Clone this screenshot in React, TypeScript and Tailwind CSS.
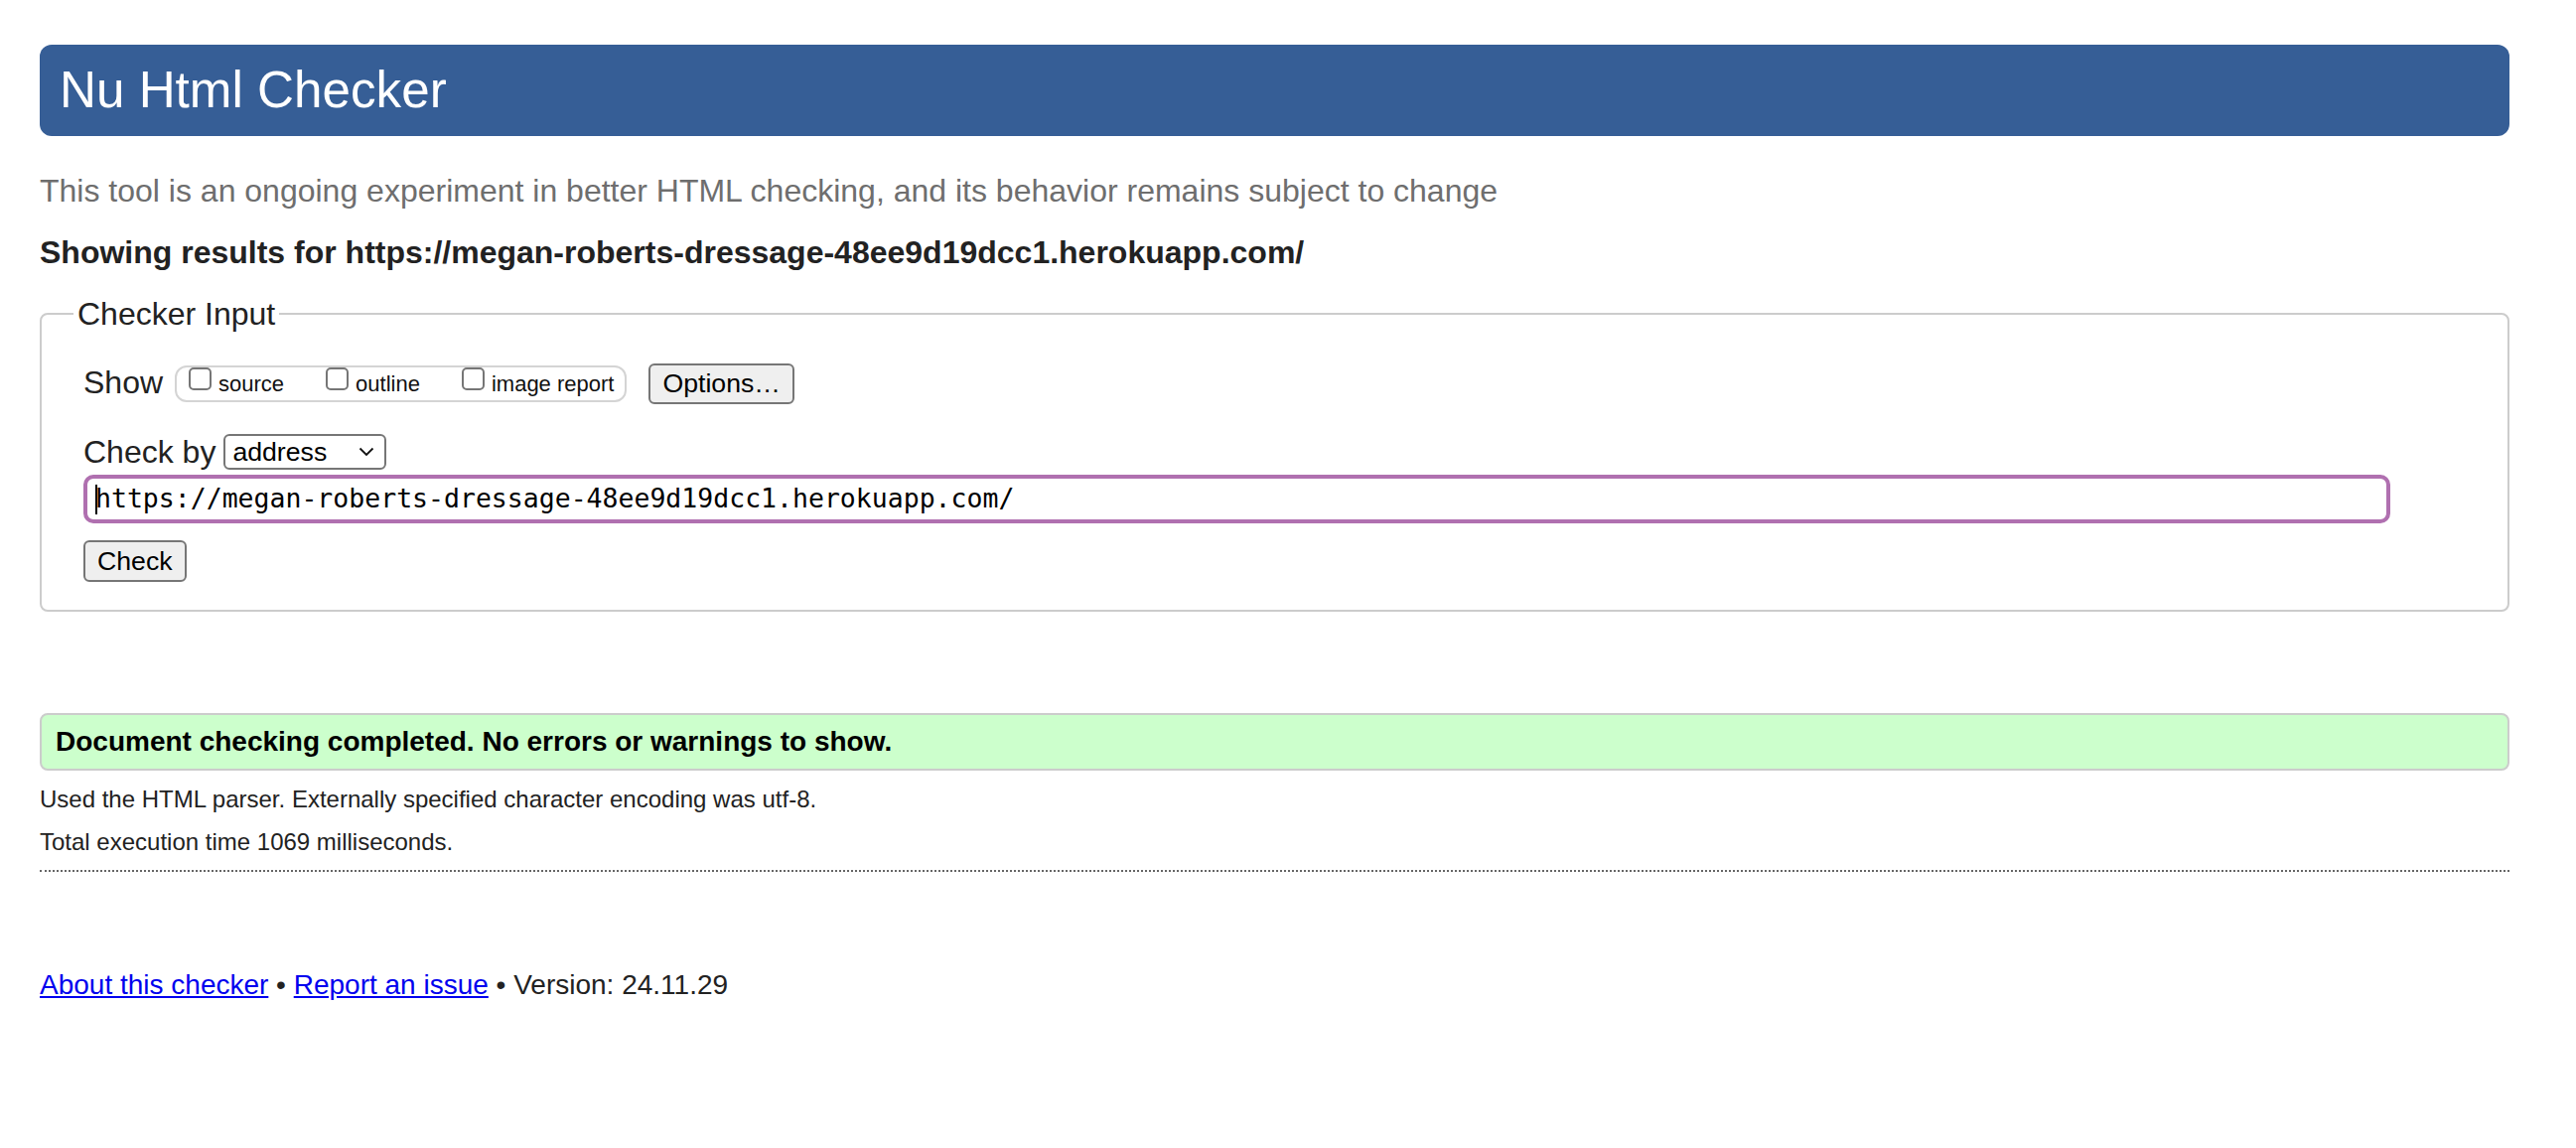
const sans = "font-['Liberation_Sans',Arial,sans-serif]";

const Checkbox = ({ label }: { label: string }) => (
  <div className="flex items-start">
    <span className="w-[23px] h-[23px] border-2 border-[#767676] rounded-[5px] bg-white shrink-0" />
    <span className="ml-[7px] text-[22px] leading-[33px] text-[#111]">{label}</span>
  </div>
);

const App = () => {
  return (
    <div className={`min-h-screen bg-white pl-[40px] pr-[67px] pt-[45px] text-[#222] ${sans}`}>
      <header className="h-[92px] rounded-[12px] bg-[#365e96] flex items-center pl-[20px]">
        <h1 className="text-[51.2px] leading-none text-white font-normal">Nu Html Checker</h1>
      </header>

      <p className="mt-[35px] text-[32px] leading-[40px] text-[#6e6e6e]">
        This tool is an ongoing experiment in better HTML checking, and its behavior remains subject to change
      </p>
      <p className="mt-[22px] text-[32px] leading-[40px] font-bold text-[#222]">
        Showing results for https://megan-roberts-dressage-48ee9d19dcc1.herokuapp.com/
      </p>

      <fieldset className="mt-[22px] border-2 border-[#cccccc] rounded-[8px] pl-[42px] pr-[118px] pb-[28px]">
        <legend className="ml-[-10px] px-[4px] text-[32px] leading-[40px] text-[#222]">Checker Input</legend>

        <div className="mt-[30px] flex items-center h-[41px]">
          <span className="text-[32px] leading-[40px] mt-[-4px]">Show</span>
          <div className="ml-[12px] h-[37px] border-2 border-[#d4d4d4] rounded-[12px] flex items-start pl-[12px] pr-[11px]">
            <Checkbox label="source" />
            <div className="ml-[42px]">
              <Checkbox label="outline" />
            </div>
            <div className="ml-[42px]">
              <Checkbox label="image report" />
            </div>
          </div>
          <button className="ml-[22px] h-[41px] px-[12px] border-2 border-[#767676] rounded-[6px] bg-[#efefef] text-[26.67px] leading-none text-black">
            Options…
          </button>
        </div>

        <div className="mt-[30px] flex items-center h-[36px]">
          <span className="text-[32px] leading-[40px]">Check by</span>
          <div className="ml-[8px] w-[164px] h-[36px] border-2 border-[#767676] rounded-[6px] bg-white flex items-center justify-between pl-[7px] pr-[10px]">
            <span className="text-[26.67px] leading-none text-black">address</span>
            <svg width="16" height="10" viewBox="0 0 16 10" fill="none">
              <path d="M1.5 1.5 L8 8 L14.5 1.5" stroke="#111" strokeWidth="1.8" />
            </svg>
          </div>
        </div>

        <div className="mt-[5px] h-[49px] border-4 border-[#b070b0] rounded-[10px] bg-white flex items-center pl-[8px]">
          <span className="w-[2px] h-[30px] bg-black mr-[-2px]" />
          <span className="font-['DejaVu_Sans_Mono',monospace] text-[26.5px] leading-none text-black">
            https://megan-roberts-dressage-48ee9d19dcc1.herokuapp.com/
          </span>
        </div>

        <button className="mt-[17px] block h-[42px] px-[12px] border-2 border-[#767676] rounded-[6px] bg-[#efefef] text-[26.67px] leading-none text-black">
          Check
        </button>
      </fieldset>

      <div className="mt-[102px] h-[58px] border-2 border-[#cccccc] rounded-[8px] bg-[#ccffcc] flex items-center pl-[14px]">
        <span className="text-[28px] leading-none font-bold text-black">
          Document checking completed. No errors or warnings to show.
        </span>
      </div>

      <p className="mt-[14px] text-[24px] leading-[30px] text-[#222]">
        Used the HTML parser. Externally specified character encoding was utf-8.
      </p>
      <p className="mt-[13px] text-[24px] leading-[30px] text-[#222]">Total execution time 1069 milliseconds.</p>
      <hr className="mt-[13px] border-0 border-t-2 border-dotted border-[#666]" />

      <p className="mt-[97px] text-[28px] leading-[34px] text-[#222]">
        <a href="#" className="text-[#0000ee] underline">About this checker</a>
        {" • "}
        <a href="#" className="text-[#0000ee] underline">Report an issue</a>
        {" • Version: 24.11.29"}
      </p>
    </div>
  );
};

export default App;
